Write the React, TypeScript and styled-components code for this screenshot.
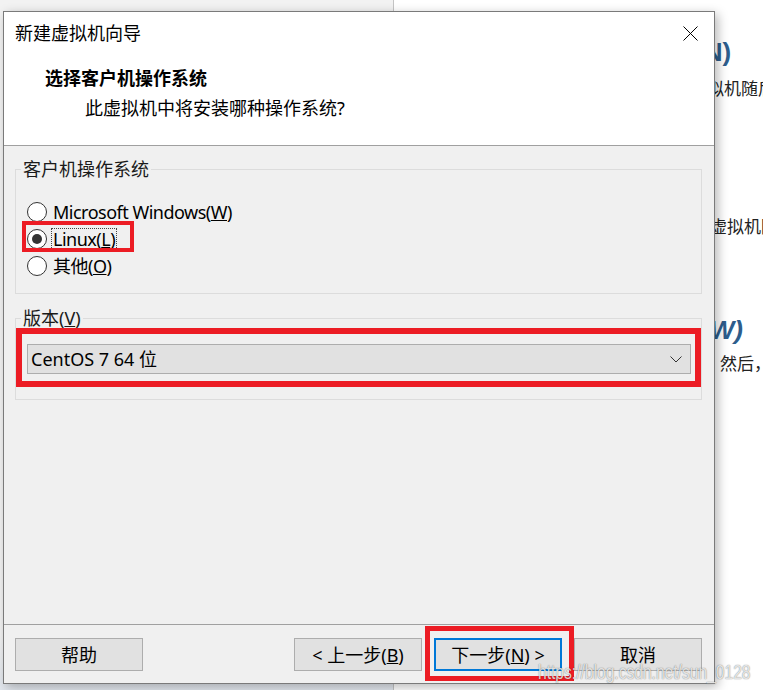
import React from "react";
import styled, { createGlobalStyle } from "styled-components";

const Global = createGlobalStyle`
  html, body { margin: 0; padding: 0; }
  body { width: 763px; height: 690px; overflow: hidden; background: #fff; }
  * { box-sizing: border-box; }
`;

const UI_FONT = `"Noto Sans", "Noto Sans CJK SC", sans-serif`;
const RED = "#ec1c24";

const Desktop = styled.div`
  position: relative;
  width: 763px;
  height: 690px;
  display: grid;
  grid-template-columns: 394px 1fr;
  overflow: hidden;
`;

const LeftPane = styled.div`
  background: linear-gradient(to bottom, #f2f2f2 0%, #f2f2f2 92%, #e1e6ed 100%);
  border-right: 1px solid #c4c4c4;
`;

const Article = styled.div`
  background: #fff;
  display: flex;
  flex-direction: column;
  padding-top: 37px;
`;

const ArticleHeading = styled.div<{ $indent: number; $gap: number; $italic?: boolean }>`
  margin-left: ${(p) => p.$indent}px;
  margin-top: ${(p) => p.$gap}px;
  font-family: "Liberation Sans", Arial, sans-serif;
  font-weight: bold;
  font-style: ${(p) => (p.$italic ? "italic" : "normal")};
  font-size: 26px;
  line-height: 30px;
  height: 30px;
  color: #2d5d8c;
  white-space: nowrap;
`;

const ArticleText = styled.div<{ $indent: number; $gap: number }>`
  margin-left: ${(p) => p.$indent}px;
  margin-top: ${(p) => p.$gap}px;
  font-family: "Noto Sans CJK SC", sans-serif;
  font-size: 17px;
  line-height: 24px;
  height: 24px;
  color: #222;
  white-space: nowrap;
`;

const Dialog = styled.div`
  position: absolute;
  left: 3px;
  top: 11px;
  width: 712px;
  height: 673px;
  border: 1px solid #7a7a7a;
  background: #f0f0f0;
  box-shadow: 3px 3px 10px rgba(0, 0, 0, 0.28);
  display: flex;
  flex-direction: column;
  font-family: ${UI_FONT};
  font-size: 18px;
  color: #000;
`;

const Header = styled.div`
  height: 134px;
  background: #fff;
  border-bottom: 1px solid #a0a0a0;
  padding: 9px 16px 0 11px;
  display: flex;
  flex-direction: column;
`;

const TitleRow = styled.div`
  display: flex;
  justify-content: space-between;
  align-items: center;
  height: 24px;
  line-height: 24px;
`;

const Title = styled.div`
  font-size: 18px;
`;

const CloseButton = styled.div`
  width: 15px;
  height: 15px;
  display: flex;
`;

const Heading = styled.div`
  margin-top: 21px;
  margin-left: 30px;
  font-weight: bold;
  line-height: 24px;
`;

const SubHeading = styled.div`
  margin-top: 6px;
  margin-left: 70px;
  line-height: 24px;
`;

const Body = styled.div`
  flex: 1;
  padding: 12px 12px 0 11px;
  display: flex;
  flex-direction: column;
`;

const Group = styled.fieldset<{ $gap: number; $padTop: number; $padBottom: number }>`
  margin: ${(p) => p.$gap}px 0 0 0;
  padding: ${(p) => p.$padTop}px 10px ${(p) => p.$padBottom}px 11px;
  border: 1px solid #dcdcdc;
  min-width: 0;
`;

const Legend = styled.legend`
  margin-left: -6px;
  padding: 0 2px;
  line-height: 22px;
  color: #1a1a1a;
`;

const RadioList = styled.div`
  display: flex;
  flex-direction: column;
`;

const RadioRow = styled.label`
  position: relative;
  display: flex;
  align-items: center;
  height: 27px;
  gap: 6px;
`;

const Circle = styled.span<{ $checked?: boolean }>`
  width: 20px;
  height: 20px;
  border-radius: 50%;
  border: 1px solid #333;
  background: #fff;
  display: flex;
  align-items: center;
  justify-content: center;
  flex: none;
  &::after {
    content: "";
    display: ${(p) => (p.$checked ? "block" : "none")};
    width: 10px;
    height: 10px;
    border-radius: 50%;
    background: #333;
  }
`;

const RadioLabel = styled.span<{ $focused?: boolean }>`
  line-height: 20px;
  padding: 0 1px;
  letter-spacing: -0.5px;
  border: 1px dotted ${(p) => (p.$focused ? "#444" : "transparent")};
  margin-left: -2px;
`;

const Annotation = styled.span<{ $l: number; $t: number; $w: number; $h: number; $b: number }>`
  position: absolute;
  left: ${(p) => p.$l}px;
  top: ${(p) => p.$t}px;
  width: ${(p) => p.$w}px;
  height: ${(p) => p.$h}px;
  border: ${(p) => p.$b}px solid ${RED};
  pointer-events: none;
`;

const SelectWrap = styled.div`
  position: relative;
`;

const Select = styled.div`
  height: 30px;
  background: #e1e1e1;
  border: 1px solid #adadad;
  display: flex;
  align-items: center;
  justify-content: space-between;
  padding: 0 8px 0 3px;
  line-height: 28px;
`;

const Footer = styled.div`
  height: 59px;
  border-top: 1px solid #a0a0a0;
  padding: 13px 12px 0 11px;
  display: flex;
  align-items: flex-start;
`;

const Spacer = styled.div`
  flex: 1;
`;

const ButtonWrap = styled.div<{ $gap: number }>`
  position: relative;
  margin-left: ${(p) => p.$gap}px;
`;

const Button = styled.div<{ $default?: boolean }>`
  width: 128px;
  height: 33px;
  background: #e1e1e1;
  border: ${(p) => (p.$default ? "2px solid #0078d7" : "1px solid #adadad")};
  display: flex;
  align-items: center;
  justify-content: center;
  line-height: 24px;
  white-space: pre;
`;

const Watermark = styled.div`
  position: absolute;
  left: 538px;
  top: 660px;
  font-family: "Liberation Sans", Arial, sans-serif;
  font-size: 20px;
  line-height: 24px;
  color: rgba(255, 255, 255, 0.8);
  text-shadow: 0 0 1px rgba(0, 0, 0, 0.45), 0 0 2px rgba(0, 0, 0, 0.2);
  white-space: nowrap;
  transform: scaleX(0.78);
  transform-origin: left center;
  pointer-events: none;
`;

export default function App() {
  return (
    <>
      <Global />
      <Desktop>
        <LeftPane />
        <Article>
          <ArticleHeading $indent={301} $gap={0}>(N)</ArticleHeading>
          <ArticleText $indent={313} $gap={9}>拟机随后</ArticleText>
          <ArticleText $indent={316} $gap={114}>虚拟机随</ArticleText>
          <ArticleHeading $indent={307} $gap={77} $italic>(W)</ArticleHeading>
          <ArticleText $indent={326} $gap={6}>然后，</ArticleText>
        </Article>

        <Dialog>
          <Header>
            <TitleRow>
              <Title>新建虚拟机向导</Title>
              <CloseButton>
                <svg width="15" height="15" viewBox="0 0 15 15">
                  <path d="M0.5 0.5 L14.5 14.5 M14.5 0.5 L0.5 14.5" stroke="#000" strokeWidth="1" fill="none" />
                </svg>
              </CloseButton>
            </TitleRow>
            <Heading>选择客户机操作系统</Heading>
            <SubHeading>此虚拟机中将安装哪种操作系统?</SubHeading>
          </Header>

          <Body>
            <Group $gap={0} $padTop={18} $padBottom={14}>
              <Legend>客户机操作系统</Legend>
              <RadioList>
                <RadioRow>
                  <Circle />
                  <RadioLabel>
                    Microsoft Windows(<u>W</u>)
                  </RadioLabel>
                </RadioRow>
                <RadioRow>
                  <Circle $checked />
                  <RadioLabel $focused>
                    Linux(<u>L</u>)
                  </RadioLabel>
                  <Annotation $l={-5} $t={-4} $w={112} $h={31} $b={4} />
                </RadioRow>
                <RadioRow>
                  <Circle />
                  <RadioLabel>
                    其他(<u>O</u>)
                  </RadioLabel>
                </RadioRow>
              </RadioList>
            </Group>

            <Group $gap={13} $padTop={15} $padBottom={25}>
              <Legend>
                版本(<u>V</u>)
              </Legend>
              <SelectWrap>
                <Select>
                  <span>CentOS 7 64 位</span>
                  <svg width="12" height="7" viewBox="0 0 12 7">
                    <polyline points="0.5,0.5 6,6 11.5,0.5" stroke="#333" strokeWidth="1" fill="none" />
                  </svg>
                </Select>
                <Annotation $l={-11} $t={-16} $w={685} $h={59} $b={6} />
              </SelectWrap>
            </Group>
          </Body>

          <Footer>
            <ButtonWrap $gap={0}>
              <Button>帮助</Button>
            </ButtonWrap>
            <Spacer />
            <ButtonWrap $gap={0}>
              <Button>
                {"< 上一步("}
                <u>B</u>
                {")"}
              </Button>
            </ButtonWrap>
            <ButtonWrap $gap={12}>
              <Button $default>
                {"下一步("}
                <u>N</u>
                {") >"}
              </Button>
              <Annotation $l={-9} $t={-12} $w={149} $h={55} $b={5} />
            </ButtonWrap>
            <ButtonWrap $gap={12}>
              <Button>取消</Button>
            </ButtonWrap>
          </Footer>
        </Dialog>
        <Watermark>https://blog.csdn.net/sun_0128</Watermark>
      </Desktop>
    </>
  );
}
